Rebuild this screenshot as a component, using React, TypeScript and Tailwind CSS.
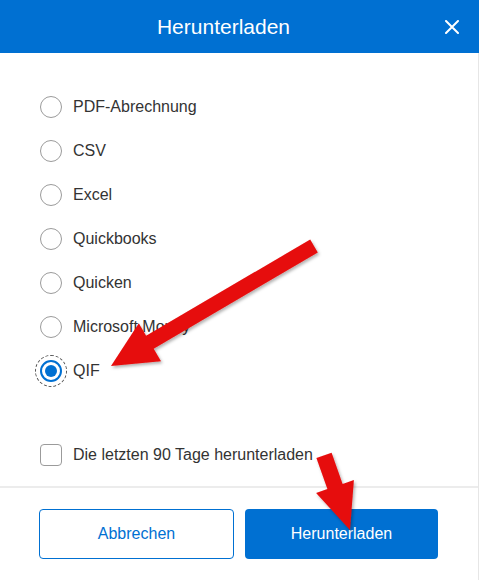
import React, { useState } from "react";

const OPTIONS = [
  "PDF-Abrechnung",
  "CSV",
  "Excel",
  "Quickbooks",
  "Quicken",
  "Microsoft Money",
  "QIF",
];

function Radio({ checked }: { checked: boolean }) {
  if (checked) {
    return (
      <span className="flex h-[22px] w-[22px] shrink-0 items-center justify-center rounded-full border-2 border-[#0070d2] bg-white outline-1 outline-dashed outline-offset-4 outline-[#555]">
        <span className="h-[12px] w-[12px] rounded-full bg-[#0070d2]" />
      </span>
    );
  }
  return (
    <span className="h-[22px] w-[22px] shrink-0 rounded-full border-[1.5px] border-[#9b9b9b] bg-white" />
  );
}

export default function App() {
  const [format, setFormat] = useState("QIF");
  const [last90, setLast90] = useState(false);

  return (
    <div
      className="relative h-[580px] w-[479px] overflow-hidden bg-white"
      style={{ fontFamily: '"Liberation Sans", Arial, sans-serif' }}
    >
      {/* Header */}
      <div className="relative flex h-[53px] items-center justify-center bg-[#0070d2] pr-[32px]">
        <h2 className="text-[21px] leading-none text-white">Herunterladen</h2>
        <button className="absolute right-[20px] top-[20px] flex h-[14px] w-[14px] items-center justify-center">
          <svg width="14" height="14" viewBox="0 0 14 14">
            <path d="M1 1 L13 13 M13 1 L1 13" stroke="#fff" strokeWidth="2" strokeLinecap="round" />
          </svg>
        </button>
      </div>

      {/* Body */}
      <div className="flex h-[527px] flex-col border-r border-[#e6e6e6]">
        <div className="flex flex-col pt-[32px] pl-[40px]">
          {OPTIONS.map((opt) => (
            <label
              key={opt}
              onClick={() => setFormat(opt)}
              className="flex h-[44px] cursor-pointer items-center gap-[11px] text-[16px] text-[#333]"
            >
              <Radio checked={format === opt} />
              <span>{opt}</span>
            </label>
          ))}
        </div>

        <label
          onClick={() => setLast90(!last90)}
          className="mt-[40px] flex h-[44px] cursor-pointer items-center gap-[11px] pl-[40px] text-[16px] text-[#333]"
        >
          <span className="h-[22px] w-[22px] shrink-0 rounded-[4px] border-[1.5px] border-[#9b9b9b] bg-white" />
          <span>Die letzten 90 Tage herunterladen</span>
        </label>

        <div className="mt-[9px] h-[2px] bg-[#ececec]" />

        {/* Actions */}
        <div className="flex gap-[11px] pt-[21px] pl-[39px] pr-[40px]">
          <button className="h-[50px] flex-1 rounded-[4px] border border-[#0070d2] bg-white text-[16px] text-[#0070d2]">
            Abbrechen
          </button>
          <button className="h-[50px] flex-1 rounded-[4px] bg-[#0070d2] text-[16px] text-white">
            Herunterladen
          </button>
        </div>
      </div>

      {/* Annotation arrows */}
      <svg
        className="pointer-events-none absolute inset-0"
        width="479"
        height="580"
        viewBox="0 0 479 580"
      >
        <defs>
          <filter id="shadow" x="-20%" y="-20%" width="140%" height="140%">
            <feDropShadow dx="1.5" dy="2" stdDeviation="1.5" floodColor="#000" floodOpacity="0.3" />
          </filter>
        </defs>
        <polygon
          filter="url(#shadow)"
          fill="#e60b0b"
          points="111,366 138.8,323.2 146.1,335.7 310.2,239.5 317.8,252.5 153.7,348.7 161,361.2"
        />
        <polygon
          filter="url(#shadow)"
          fill="#e60b0b"
          points="350,530 316.1,493 327.4,489.1 316.4,457.9 331.6,452.7 342.6,483.9 353.9,480"
        />
      </svg>
    </div>
  );
}
